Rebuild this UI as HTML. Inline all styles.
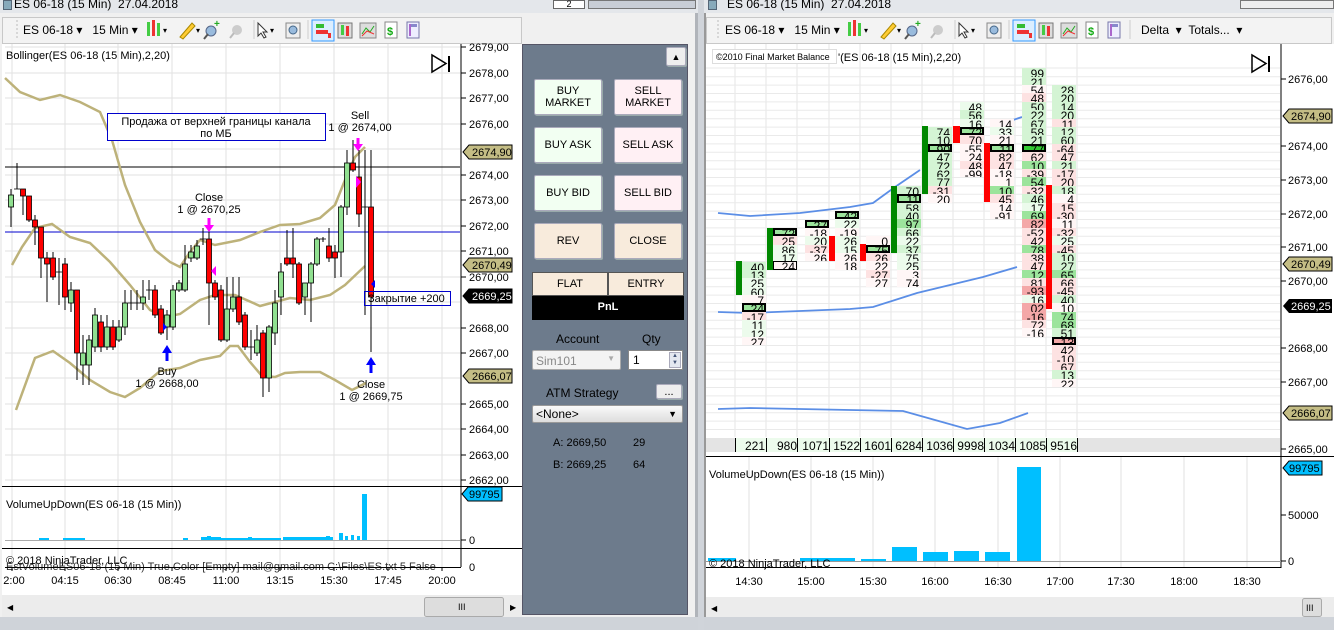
<!DOCTYPE html>
<html><head><meta charset="utf-8">
<style>
*{margin:0;padding:0;box-sizing:border-box}
body{width:1334px;height:630px;overflow:hidden;background:#d8dce2;font-family:"Liberation Sans",Arial,sans-serif;font-size:11px;color:#000;position:relative}
.a{position:absolute}
.tb{background:#f3f3f3;border:1px solid #c8c8c8}
.btn{position:absolute;border:1px solid #aab;border-radius:2px;text-align:center;font-size:11px;line-height:12px;display:flex;align-items:center;justify-content:center;box-shadow:1px 1px 0 #9aa}
.col{position:absolute;width:24px}
.col i{display:block;height:8.4px;font-style:normal;font-size:12px;line-height:12px;text-align:right;padding-right:2px;overflow:hidden}
.g{background:#d4f4d4}.G{background:#9ce49c}.p{background:#fde2e2}.R{background:#f4a8a8}.w{background:#fff6f6}.gw{background:#ecfbec}
.col i.b{outline:2px solid #000;outline-offset:-2px;background:#9ce49c}
.col i.bp{outline:2px solid #000;outline-offset:-2px;background:#f4a8a8}
</style></head><body>

<!-- title bars -->
<div class="a" style="left:0;top:0;width:698px;height:13px;background:#e4e7eb"></div>
<div class="a" style="left:14px;top:-3px;font-size:12px">ES 06-18 (15 Min)&nbsp; 27.04.2018</div>
<div class="a" style="left:3px;top:0;width:9px;height:10px;background:#8ab;border:1px solid #567"></div>
<div class="a" style="left:553px;top:0;width:32px;height:9px;background:#fff;border:1px solid #666;font-size:9px;text-align:center;line-height:6px">2</div>
<div class="a" style="left:588px;top:0;width:108px;height:9px;background:#c9ced6;border:1px solid #777"></div>
<div class="a" style="left:700px;top:0;width:634px;height:13px;background:#e4e7eb"></div>
<div class="a" style="left:727px;top:-3px;font-size:12px">ES 06-18 (15 Min)&nbsp; 27.04.2018</div>
<div class="a" style="left:708px;top:0;width:9px;height:10px;background:#8ab;border:1px solid #567"></div>
<div class="a" style="left:1240px;top:0;width:94px;height:9px;background:#eee;border:1px solid #777"></div>

<!-- window frames -->
<div class="a" style="left:0;top:13px;width:698px;height:617px;background:#f0f0f0;border-right:3px solid #b0b4ba"></div>
<div class="a" style="left:698px;top:0;width:6px;height:630px;background:#d0d4da"></div>
<div class="a" style="left:704px;top:13px;width:630px;height:617px;background:#f0f0f0;border-left:2px solid #999"></div>

<!-- toolbars -->
<div class="a tb" style="left:2px;top:17px;width:520px;height:27px"></div>
<div class="a tb" style="left:706px;top:17px;width:626px;height:27px"></div>
<div class="a" style="left:23px;top:23px;font-size:12px">ES 06-18 &#9662;&nbsp;&nbsp; 15 Min &#9662;</div>
<div class="a" style="left:725px;top:23px;font-size:12px">ES 06-18 &#9662;&nbsp;&nbsp; 15 Min &#9662;</div>
<div class="a" style="left:1141px;top:23px;font-size:12px">Delta &nbsp;&#9662;&nbsp;&nbsp;Totals... &nbsp;&#9662;</div>
<svg class="a" style="left:0;top:15px" width="1334" height="30">
 <g id="tbi">
 <line x1="17" y1="5" x2="17" y2="24" stroke="#bbb" stroke-dasharray="2 2"/>
 <rect x="147" y="7" width="3" height="14" fill="#4c4"/><rect x="152" y="5" width="3" height="16" fill="#e33"/><rect x="157" y="8" width="3" height="13" fill="#4c4"/><text x="163" y="18" font-size="8">&#9662;</text>
 <path d="M180 22 L192 8 L195 11 L183 24Z" fill="#fc3" stroke="#a80"/><text x="196" y="18" font-size="8">&#9662;</text>
 <circle cx="211" cy="16" r="5" fill="#9bd" stroke="#568"/><line x1="208" y1="19" x2="204" y2="24" stroke="#555" stroke-width="2"/><text x="214" y="12" font-size="10" fill="#2a2" font-weight="bold">+</text>
 <circle cx="237" cy="15" r="5" fill="#ccc"/><line x1="234" y1="18" x2="230" y2="23" stroke="#bbb" stroke-width="2"/>
 <line x1="254" y1="5" x2="254" y2="24" stroke="#ccc"/>
 <path d="M258 8 L258 21 L261 18 L264 23 L266 22 L263 17 L267 17Z" fill="#fff" stroke="#333"/><text x="270" y="18" font-size="8">&#9662;</text>
 <rect x="286" y="8" width="14" height="15" fill="#eee" stroke="#888"/><circle cx="293" cy="15" r="4" fill="#9bd" stroke="#468"/>
 <line x1="308" y1="5" x2="308" y2="24" stroke="#ccc"/>
 <rect x="312" y="5" width="22" height="21" fill="#dbeeff" stroke="#39f"/><rect x="316" y="9" width="8" height="4" fill="#3b3"/><rect x="316" y="15" width="12" height="4" fill="#e33"/><rect x="328" y="18" width="3" height="5" fill="#e33"/>
 <rect x="338" y="8" width="14" height="15" fill="#ddd" stroke="#777"/><rect x="341" y="10" width="3" height="10" fill="#4c4"/><rect x="346" y="11" width="3" height="10" fill="#e33"/>
 <rect x="360" y="8" width="16" height="15" fill="#ddd" stroke="#888"/><path d="M362 19 L366 13 L370 17 L374 11" stroke="#2a2" fill="none"/><path d="M362 21 L367 16 L374 19" stroke="#e33" fill="none"/>
 <rect x="385" y="7" width="12" height="16" fill="#fff" stroke="#888"/><text x="387" y="20" font-size="11" fill="#1a1" font-weight="bold">$</text>
 <rect x="407" y="7" width="12" height="16" fill="#eef" stroke="#77a"/><rect x="409" y="9" width="8" height="3" fill="#88c"/><rect x="409" y="9" width="2" height="12" fill="#a6c"/>
 </g>
 <use href="#tbi" x="701"/>
 <line x1="1130" y1="5" x2="1130" y2="24" stroke="#ccc"/>
</svg>

<!-- LEFT CHART -->
<svg class="a" style="left:0;top:0" width="700" height="630">
 <rect x="2" y="44" width="520" height="551" fill="#fff"/>
 <g stroke="#e2e2e2">
  <line x1="12" y1="44" x2="12" y2="567"/><line x1="65" y1="44" x2="65" y2="567"/><line x1="118" y1="44" x2="118" y2="567"/><line x1="172" y1="44" x2="172" y2="567"/><line x1="226" y1="44" x2="226" y2="567"/><line x1="280" y1="44" x2="280" y2="567"/><line x1="334" y1="44" x2="334" y2="567"/><line x1="388" y1="44" x2="388" y2="567"/><line x1="442" y1="44" x2="442" y2="567"/>
  <line x1="5" y1="47" x2="460" y2="47"/><line x1="5" y1="73" x2="460" y2="73"/><line x1="5" y1="98" x2="460" y2="98"/><line x1="5" y1="124" x2="460" y2="124"/><line x1="5" y1="149" x2="460" y2="149"/><line x1="5" y1="175" x2="460" y2="175"/><line x1="5" y1="200" x2="460" y2="200"/><line x1="5" y1="226" x2="460" y2="226"/><line x1="5" y1="251" x2="460" y2="251"/><line x1="5" y1="277" x2="460" y2="277"/><line x1="5" y1="302" x2="460" y2="302"/><line x1="5" y1="328" x2="460" y2="328"/><line x1="5" y1="353" x2="460" y2="353"/><line x1="5" y1="378" x2="460" y2="378"/><line x1="5" y1="404" x2="460" y2="404"/><line x1="5" y1="429" x2="460" y2="429"/><line x1="5" y1="455" x2="460" y2="455"/><line x1="5" y1="480" x2="460" y2="480"/>
 </g>
 <line x1="5" y1="167" x2="460" y2="167" stroke="#000"/>
 <line x1="5" y1="232" x2="460" y2="232" stroke="#00c"/>
 <g fill="none" stroke="#bdb27a" stroke-width="2.5">
  <polyline points="5,78 20,92 40,100 60,95 80,102 100,112 112,140 125,185 140,222 155,250 170,262 180,267 190,252 200,240 215,245 240,240 260,232 280,225 300,224 320,218 335,205 345,180 355,157 365,147"/>
  <polyline points="12,265 22,247 35,228 52,224 70,237 90,243 110,262 130,285 150,310 165,317 180,314 200,300 215,295 235,295 260,306 275,302 290,298 310,300 330,295 345,285 365,266"/>
  <polyline points="16,410 35,358 53,351 70,363 90,380 110,392 125,397 140,388 160,371 180,368 200,360 220,356 230,346 238,346 250,362 262,376 275,377 285,373 300,372 320,372 335,380 352,390 366,383"/>
 </g>
 <g stroke="#000" stroke-width="1">
  <line x1="11" y1="189" x2="11" y2="227"/><line x1="17" y1="163" x2="17" y2="189"/><line x1="23" y1="189" x2="23" y2="215"/><line x1="29" y1="196" x2="29" y2="222"/><line x1="35" y1="215" x2="35" y2="245"/><line x1="41" y1="227" x2="41" y2="278"/><line x1="47" y1="252" x2="47" y2="302"/><line x1="53" y1="252" x2="53" y2="280"/><line x1="59" y1="258" x2="59" y2="305"/><line x1="65" y1="258" x2="65" y2="310"/><line x1="71" y1="282" x2="71" y2="312"/><line x1="77" y1="290" x2="77" y2="380"/><line x1="83" y1="335" x2="83" y2="385"/><line x1="89" y1="335" x2="89" y2="385"/><line x1="95" y1="308" x2="95" y2="352"/><line x1="101" y1="315" x2="101" y2="352"/><line x1="107" y1="315" x2="107" y2="350"/><line x1="113" y1="320" x2="113" y2="350"/><line x1="119" y1="320" x2="119" y2="342"/><line x1="125" y1="290" x2="125" y2="335"/><line x1="131" y1="290" x2="131" y2="310"/><line x1="137" y1="290" x2="137" y2="310"/><line x1="143" y1="280" x2="143" y2="310"/><line x1="149" y1="280" x2="149" y2="300"/><line x1="155" y1="285" x2="155" y2="318"/><line x1="161" y1="305" x2="161" y2="335"/><line x1="167" y1="310" x2="167" y2="340"/><line x1="173" y1="285" x2="173" y2="330"/><line x1="179" y1="280" x2="179" y2="292"/><line x1="185" y1="245" x2="185" y2="292"/><line x1="191" y1="245" x2="191" y2="262"/><line x1="197" y1="240" x2="197" y2="260"/><line x1="203" y1="228" x2="203" y2="245"/><line x1="209" y1="230" x2="209" y2="325"/><line x1="215" y1="280" x2="215" y2="300"/><line x1="221" y1="285" x2="221" y2="342"/><line x1="227" y1="277" x2="227" y2="342"/><line x1="233" y1="277" x2="233" y2="312"/><line x1="239" y1="277" x2="239" y2="325"/><line x1="245" y1="312" x2="245" y2="350"/><line x1="251" y1="330" x2="251" y2="360"/><line x1="257" y1="325" x2="257" y2="356"/><line x1="263" y1="330" x2="263" y2="397"/><line x1="269" y1="325" x2="269" y2="392"/><line x1="275" y1="290" x2="275" y2="345"/><line x1="281" y1="263" x2="281" y2="315"/><line x1="287" y1="230" x2="287" y2="266"/><line x1="293" y1="228" x2="293" y2="278"/><line x1="299" y1="262" x2="299" y2="305"/><line x1="305" y1="283" x2="305" y2="315"/><line x1="311" y1="262" x2="311" y2="322"/><line x1="317" y1="237" x2="317" y2="266"/><line x1="323" y1="237" x2="323" y2="242"/><line x1="329" y1="228" x2="329" y2="262"/><line x1="335" y1="245" x2="335" y2="278"/><line x1="341" y1="205" x2="341" y2="277"/><line x1="347" y1="150" x2="347" y2="215"/><line x1="353" y1="140" x2="353" y2="172"/><line x1="359" y1="150" x2="359" y2="227"/><line x1="365" y1="150" x2="365" y2="315"/><line x1="371" y1="150" x2="371" y2="352"/>
 </g>
 <g stroke="#000" stroke-width="0.8">
  <g fill="#90e090">
   <rect x="8.5" y="195" width="5" height="12"/><rect x="68.5" y="290" width="5" height="13"/><rect x="80.5" y="353" width="5" height="12"/><rect x="86.5" y="340" width="5" height="25"/><rect x="92.5" y="315" width="5" height="32"/><rect x="104.5" y="327" width="5" height="20"/><rect x="116.5" y="327" width="5" height="13"/><rect x="122.5" y="303" width="5" height="24"/><rect x="140.5" y="297" width="5" height="6"/><rect x="164.5" y="315" width="5" height="12"/><rect x="170.5" y="290" width="5" height="37"/><rect x="176.5" y="283" width="5" height="7"/><rect x="182.5" y="264" width="5" height="26"/><rect x="188.5" y="252" width="5" height="6"/><rect x="194.5" y="246" width="5" height="12"/><rect x="224.5" y="309" width="5" height="31"/><rect x="230.5" y="297" width="5" height="12"/><rect x="254.5" y="340" width="5" height="13"/><rect x="266.5" y="327" width="5" height="51"/><rect x="272.5" y="303" width="5" height="30"/><rect x="278.5" y="272" width="5" height="25"/><rect x="302.5" y="283" width="5" height="14"/><rect x="308.5" y="264" width="5" height="19"/><rect x="314.5" y="239" width="5" height="25"/><rect x="338.5" y="207" width="5" height="45"/><rect x="344.5" y="163" width="5" height="44"/>
  </g>
  <g fill="#f00">
   <rect x="20.5" y="189" width="5" height="7"/><rect x="26.5" y="196" width="5" height="24"/><rect x="32.5" y="220" width="5" height="7"/><rect x="38.5" y="227" width="5" height="31"/><rect x="44.5" y="258" width="5" height="6"/><rect x="50.5" y="258" width="5" height="19"/><rect x="62.5" y="264" width="5" height="33"/><rect x="74.5" y="290" width="5" height="63"/><rect x="98.5" y="322" width="5" height="25"/><rect x="110.5" y="327" width="5" height="20"/><rect x="152.5" y="290" width="5" height="25"/><rect x="158.5" y="309" width="5" height="24"/><rect x="206.5" y="239" width="5" height="44"/><rect x="212.5" y="283" width="5" height="14"/><rect x="218.5" y="290" width="5" height="50"/><rect x="236.5" y="297" width="5" height="25"/><rect x="242.5" y="315" width="5" height="32"/><rect x="260.5" y="333" width="5" height="45"/><rect x="284.5" y="258" width="5" height="6"/><rect x="290.5" y="258" width="5" height="6"/><rect x="296.5" y="264" width="5" height="39"/><rect x="326.5" y="246" width="5" height="12"/><rect x="332.5" y="252" width="5" height="6"/><rect x="350.5" y="163" width="5" height="7"/><rect x="356.5" y="177" width="5" height="37"/><rect x="368.5" y="207" width="5" height="90"/>
  </g>
  <g><line x1="14" y1="189" x2="20" y2="189"/><line x1="56" y1="272" x2="62" y2="272"/><line x1="128" y1="303" x2="134" y2="303"/><line x1="134" y1="303" x2="140" y2="303"/><line x1="146" y1="290" x2="152" y2="290"/><line x1="200" y1="239" x2="206" y2="239"/><line x1="248" y1="347" x2="254" y2="347"/><line x1="320" y1="239" x2="326" y2="239"/><line x1="362" y1="207" x2="368" y2="207"/></g>
 </g>
 <g fill="#f0f">
  <rect x="356.5" y="138" width="3" height="7"/><path d="M353 144 L363 144 L358 151Z"/>
  <rect x="207.5" y="218" width="3" height="8"/><path d="M204 225 L214 225 L209 232Z"/>
  <path d="M356 176 L361 182 L356 188Z"/><path d="M216 266 L211 271 L216 276Z"/>
 </g>
 <g fill="#00f">
  <rect x="165.5" y="352" width="3" height="9"/><path d="M162 353 L172 353 L167 345Z"/>
  <rect x="369.5" y="364" width="3" height="9"/><path d="M366 365 L376 365 L371 357Z"/>
  <path d="M163 323 L167 327 L163 331Z"/><path d="M375 280 L371 284 L375 288Z"/>
 </g>
 <g font-size="11" text-anchor="middle">
  <text x="360" y="119">Sell</text><text x="360" y="131">1 @ 2674,00</text>
  <text x="209" y="201">Close</text><text x="209" y="213">1 @ 2670,25</text>
  <text x="167" y="375">Buy</text><text x="167" y="387">1 @ 2668,00</text>
  <text x="371" y="388">Close</text><text x="371" y="400">1 @ 2669,75</text>
 </g>
 <rect x="107.5" y="113.5" width="218" height="27" fill="#fff" stroke="#00c"/>
 <text x="216" y="125" font-size="11" text-anchor="middle">Продажа от верхней границы канала</text>
 <text x="216" y="137" font-size="11" text-anchor="middle">по МБ</text>
 <rect x="364.5" y="291.5" width="86" height="14" fill="none" stroke="#00c"/>
 <text x="368" y="302" font-size="11">Закрытие +200</text>
 <text x="6" y="59" font-size="11">Bollinger(ES 06-18 (15 Min),2,20)</text>
 <path d="M432 55 L432 72 L446 63.5Z" fill="none" stroke="#000" stroke-width="1.5"/><line x1="449" y1="56" x2="449" y2="72" stroke="#000" stroke-width="2"/>
 <line x1="461" y1="44" x2="461" y2="567" stroke="#000"/>
 <g font-size="11">
  <text x="469" y="51">2679,00</text><text x="469" y="77">2678,00</text><text x="469" y="102">2677,00</text><text x="469" y="128">2676,00</text><text x="469" y="179">2674,00</text><text x="469" y="204">2673,00</text><text x="469" y="230">2672,00</text><text x="469" y="255">2671,00</text><text x="469" y="281">2670,00</text><text x="469" y="332">2668,00</text><text x="469" y="357">2667,00</text><text x="469" y="408">2665,00</text><text x="469" y="433">2664,00</text><text x="469" y="459">2663,00</text><text x="469" y="484">2662,00</text>
 </g>
 <g stroke="#000"><line x1="461" y1="47" x2="466" y2="47"/><line x1="461" y1="73" x2="466" y2="73"/><line x1="461" y1="98" x2="466" y2="98"/><line x1="461" y1="124" x2="466" y2="124"/><line x1="461" y1="175" x2="466" y2="175"/><line x1="461" y1="200" x2="466" y2="200"/><line x1="461" y1="226" x2="466" y2="226"/><line x1="461" y1="251" x2="466" y2="251"/><line x1="461" y1="277" x2="466" y2="277"/><line x1="461" y1="328" x2="466" y2="328"/><line x1="461" y1="353" x2="466" y2="353"/><line x1="461" y1="404" x2="466" y2="404"/><line x1="461" y1="429" x2="466" y2="429"/><line x1="461" y1="455" x2="466" y2="455"/><line x1="461" y1="480" x2="466" y2="480"/></g>
 <path d="M463 152 L469 145 L512 145 L512 159 L469 159Z" fill="#c4bd85" stroke="#000"/><text x="472" y="156" font-size="11">2674,90</text>
 <path d="M463 265 L469 258 L512 258 L512 272 L469 272Z" fill="#c4bd85" stroke="#000"/><text x="472" y="269" font-size="11">2670,49</text>
 <path d="M463 296 L469 289 L512 289 L512 303 L469 303Z" fill="#000" stroke="#000"/><text x="472" y="300" font-size="11" fill="#fff">2669,25</text>
 <path d="M463 376 L469 369 L512 369 L512 383 L469 383Z" fill="#c4bd85" stroke="#000"/><text x="472" y="380" font-size="11">2666,07</text>
 <line x1="2" y1="486.5" x2="522" y2="486.5" stroke="#000"/>
 <line x1="2" y1="548.5" x2="522" y2="548.5" stroke="#000"/>
 <line x1="5" y1="540.5" x2="460" y2="540.5" stroke="#aaa"/>
 <text x="6" y="508" font-size="11">VolumeUpDown(ES 06-18 (15 Min))</text>
 <g fill="#00bfff">
  <rect x="39" y="538" width="10" height="2"/><rect x="63" y="538" width="22" height="2"/><rect x="183" y="538" width="5" height="2"/><rect x="201" y="537" width="20" height="3"/><rect x="207" y="536" width="4" height="4"/><rect x="221" y="538" width="60" height="2"/><rect x="248" y="537" width="4" height="3"/><rect x="283" y="537" width="50" height="3"/><rect x="326" y="536" width="4" height="4"/><rect x="339" y="533" width="4" height="7"/><rect x="345" y="536" width="3" height="4"/><rect x="351" y="535" width="3" height="5"/><rect x="357" y="536" width="3" height="4"/><rect x="362" y="494" width="5" height="46"/>
 </g>
 <path d="M462 494 L468 487 L502 487 L502 501 L468 501Z" fill="#00bfff" stroke="#000"/><text x="469" y="498" font-size="11">99795</text>
 <text x="469" y="544" font-size="11">0</text><line x1="461" y1="540" x2="466" y2="540" stroke="#000"/>
 <text x="469" y="571" font-size="11">0</text>
 <text x="6" y="564" font-size="11">© 2018 NinjaTrader, LLC</text>
 <text x="6" y="570" font-size="11" fill="#333">EstVolumeES06-18 (15 Min) True Color [Empty] mail@gmail.com C:\Files\ES.txt 5 False</text>
 <line x1="5" y1="567.5" x2="461" y2="567.5" stroke="#000"/>
 <g stroke="#000"><line x1="12" y1="567" x2="12" y2="571"/><line x1="65" y1="567" x2="65" y2="571"/><line x1="118" y1="567" x2="118" y2="571"/><line x1="172" y1="567" x2="172" y2="571"/><line x1="226" y1="567" x2="226" y2="571"/><line x1="280" y1="567" x2="280" y2="571"/><line x1="334" y1="567" x2="334" y2="571"/><line x1="388" y1="567" x2="388" y2="571"/><line x1="442" y1="567" x2="442" y2="571"/></g>
 <g font-size="11" text-anchor="middle"><text x="14" y="584">2:00</text><text x="65" y="584">04:15</text><text x="118" y="584">06:30</text><text x="172" y="584">08:45</text><text x="226" y="584">11:00</text><text x="280" y="584">13:15</text><text x="334" y="584">15:30</text><text x="388" y="584">17:45</text><text x="442" y="584">20:00</text></g>
 <rect x="2" y="595" width="520" height="22" fill="#ececec"/>
 <rect x="424.5" y="597.5" width="79" height="19" rx="2" fill="#ddd" stroke="#aaa"/>
 <text x="458" y="610" font-size="9">III</text>
 <text x="7" y="610" font-size="8">&#9664;</text><text x="510" y="610" font-size="8">&#9654;</text>
 <rect x="0" y="617" width="698" height="13" fill="#cfd3d9"/>
</svg>

<!-- CHART TRADER PANEL -->
<div class="a" style="left:522px;top:44px;width:166px;height:571px;background:#6d7b8c;border:1px solid #556"></div>
<div class="btn" style="left:666px;top:47px;width:20px;height:19px;background:#eee;font-size:9px">&#9650;</div>
<div class="btn" style="left:534px;top:79px;width:68px;height:36px;background:#f2fff2">BUY<br>MARKET</div>
<div class="btn" style="left:614px;top:79px;width:68px;height:36px;background:#fff0f4">SELL<br>MARKET</div>
<div class="btn" style="left:534px;top:127px;width:68px;height:36px;background:#f2fff2">BUY ASK</div>
<div class="btn" style="left:614px;top:127px;width:68px;height:36px;background:#fff0f4">SELL ASK</div>
<div class="btn" style="left:534px;top:175px;width:68px;height:36px;background:#f2fff2">BUY BID</div>
<div class="btn" style="left:614px;top:175px;width:68px;height:36px;background:#fff0f4">SELL BID</div>
<div class="btn" style="left:534px;top:223px;width:68px;height:36px;background:#f8ebdc">REV</div>
<div class="btn" style="left:614px;top:223px;width:68px;height:36px;background:#f8ebdc">CLOSE</div>
<div class="a" style="left:532px;top:272px;width:76px;height:24px;background:#f8ebdc;border:1px solid #555;text-align:center;line-height:22px">FLAT</div>
<div class="a" style="left:608px;top:272px;width:76px;height:24px;background:#f8ebdc;border:1px solid #555;text-align:center;line-height:22px">ENTRY</div>
<div class="a" style="left:532px;top:296px;width:152px;height:24px;background:#000;color:#fff;font-weight:bold;text-align:center;line-height:23px">PnL</div>
<div class="a" style="left:556px;top:332px;font-size:12px">Account</div>
<div class="a" style="left:642px;top:332px;font-size:12px">Qty</div>
<div class="a" style="left:532px;top:350px;width:89px;height:20px;background:#f3f3f3;border:1px solid #aaa;border-radius:2px;color:#888;font-size:12px;padding:3px 3px">Sim101<span style="position:absolute;right:5px;font-size:8px;color:#aaa">&#9660;</span></div>
<div class="a" style="left:628px;top:350px;width:55px;height:20px;background:#fff;border:1px solid #888;font-size:12px;padding:2px 4px">1<span style="position:absolute;right:1px;top:1px;width:12px;height:16px;background:#e4e8f0;border:1px solid #aab;font-size:6px;line-height:7px;text-align:center;color:#457">&#9650;<br>&#9660;</span></div>
<div class="a" style="left:546px;top:386px;font-size:12px">ATM Strategy</div>
<div class="btn" style="left:656px;top:384px;width:26px;height:15px;background:#eee;line-height:8px">...</div>
<div class="a" style="left:532px;top:405px;width:151px;height:18px;background:linear-gradient(#fafafa,#ddd);border:1px solid #999;border-radius:2px;font-size:12px;padding:1px 3px">&lt;None&gt;<span style="position:absolute;right:5px;top:3px;font-size:9px">&#9660;</span></div>
<div class="a" style="left:553px;top:437px;font-size:11px">A: 2669,50</div><div class="a" style="left:633px;top:437px;font-size:11px">29</div>
<div class="a" style="left:553px;top:459px;font-size:11px">B: 2669,25</div><div class="a" style="left:633px;top:459px;font-size:11px">64</div>

<!-- RIGHT CHART -->
<svg class="a" style="left:0;top:0" width="1334" height="630">
 <rect x="706" y="44" width="628" height="553" fill="#fff"/>
 <g stroke="#e4e4e4">
  <line x1="735" y1="44" x2="735" y2="437"/><line x1="766" y1="44" x2="766" y2="437"/><line x1="797" y1="44" x2="797" y2="437"/><line x1="829" y1="44" x2="829" y2="437"/><line x1="860" y1="44" x2="860" y2="437"/><line x1="891" y1="44" x2="891" y2="437"/><line x1="922" y1="44" x2="922" y2="437"/><line x1="953" y1="44" x2="953" y2="437"/><line x1="984" y1="44" x2="984" y2="437"/><line x1="1015" y1="44" x2="1015" y2="437"/><line x1="1046" y1="44" x2="1046" y2="437"/><line x1="1077" y1="44" x2="1077" y2="437"/>
 </g>
 <g stroke="#eaeaea">
  <line x1="706" y1="68" x2="1280" y2="68"/><line x1="706" y1="76.7" x2="1280" y2="76.7"/><line x1="706" y1="85.1" x2="1280" y2="85.1"/><line x1="706" y1="93.5" x2="1280" y2="93.5"/><line x1="706" y1="101.9" x2="1280" y2="101.9"/><line x1="706" y1="110.3" x2="1280" y2="110.3"/><line x1="706" y1="118.7" x2="1280" y2="118.7"/><line x1="706" y1="127.1" x2="1280" y2="127.1"/><line x1="706" y1="135.5" x2="1280" y2="135.5"/><line x1="706" y1="143.9" x2="1280" y2="143.9"/><line x1="706" y1="152.3" x2="1280" y2="152.3"/><line x1="706" y1="160.7" x2="1280" y2="160.7"/><line x1="706" y1="169.1" x2="1280" y2="169.1"/><line x1="706" y1="177.5" x2="1280" y2="177.5"/><line x1="706" y1="185.9" x2="1280" y2="185.9"/><line x1="706" y1="194.3" x2="1280" y2="194.3"/><line x1="706" y1="202.7" x2="1280" y2="202.7"/><line x1="706" y1="211.1" x2="1280" y2="211.1"/><line x1="706" y1="219.5" x2="1280" y2="219.5"/><line x1="706" y1="227.9" x2="1280" y2="227.9"/><line x1="706" y1="236.3" x2="1280" y2="236.3"/><line x1="706" y1="244.7" x2="1280" y2="244.7"/><line x1="706" y1="253.1" x2="1280" y2="253.1"/><line x1="706" y1="261.5" x2="1280" y2="261.5"/><line x1="706" y1="269.9" x2="1280" y2="269.9"/><line x1="706" y1="278.3" x2="1280" y2="278.3"/><line x1="706" y1="286.7" x2="1280" y2="286.7"/><line x1="706" y1="295.1" x2="1280" y2="295.1"/><line x1="706" y1="303.5" x2="1280" y2="303.5"/><line x1="706" y1="311.9" x2="1280" y2="311.9"/><line x1="706" y1="320.3" x2="1280" y2="320.3"/><line x1="706" y1="328.7" x2="1280" y2="328.7"/><line x1="706" y1="337.1" x2="1280" y2="337.1"/><line x1="706" y1="345.5" x2="1280" y2="345.5"/><line x1="706" y1="353.9" x2="1280" y2="353.9"/><line x1="706" y1="362.3" x2="1280" y2="362.3"/><line x1="706" y1="370.7" x2="1280" y2="370.7"/><line x1="706" y1="379.1" x2="1280" y2="379.1"/><line x1="706" y1="387.5" x2="1280" y2="387.5"/><line x1="706" y1="395.9" x2="1280" y2="395.9"/><line x1="706" y1="404.3" x2="1280" y2="404.3"/><line x1="706" y1="412.7" x2="1280" y2="412.7"/><line x1="706" y1="421.1" x2="1280" y2="421.1"/><line x1="706" y1="429.5" x2="1280" y2="429.5"/>
 </g>
 <g fill="none" stroke="#5b8ee6" stroke-width="1.8">
  <polyline points="718,213 750,216 800,213 850,207 873,203 895,187 920,170"/>
  <polyline points="1013,120 1022,117"/>
  <polyline points="718,312 750,313 800,311 850,309 873,307 895,300 917,293 950,285 983,277 1017,267"/>
  <polyline points="718,409 750,408 800,409 850,410 903,411 935,420 967,429 1000,423 1028,413"/>
 </g>
 <g>
  <rect x="736" y="261" width="6" height="34" fill="#080"/>
  <rect x="767" y="228" width="6" height="42" fill="#080"/>
  <rect x="829" y="236" width="6" height="25" fill="#f00"/>
  <rect x="860" y="244" width="6" height="17" fill="#f00"/>
  <rect x="891" y="186" width="6" height="67" fill="#080"/>
  <rect x="922" y="126" width="6" height="68" fill="#080"/>
  <rect x="953" y="126" width="7" height="17" fill="#f00"/>
  <rect x="984" y="143" width="6" height="59" fill="#f00"/>
  <rect x="1046" y="185" width="6" height="124" fill="#f00"/>
 </g>
 <rect x="712.5" y="49.5" width="124" height="14" fill="#fff" stroke="#ddd"/>
 <text x="716" y="60" font-size="9">©2010 Final Market Balance</text>
 <text x="838" y="61" font-size="11">'(ES 06-18 (15 Min),2,20)</text>
 <path d="M1252 55 L1252 72 L1266 63.5Z" fill="none" stroke="#000" stroke-width="1.5"/><line x1="1269" y1="56" x2="1269" y2="72" stroke="#000" stroke-width="2"/>
 <rect x="706" y="438" width="574" height="14" fill="#e4e4e4"/>
 <rect x="736" y="438" width="341" height="14" fill="#ecfbec"/>
 <g stroke="#000"><line x1="735.5" y1="438" x2="735.5" y2="452"/><line x1="766.5" y1="438" x2="766.5" y2="452"/><line x1="797.5" y1="438" x2="797.5" y2="452"/><line x1="829.5" y1="438" x2="829.5" y2="452"/><line x1="860.5" y1="438" x2="860.5" y2="452"/><line x1="891.5" y1="438" x2="891.5" y2="452"/><line x1="922.5" y1="438" x2="922.5" y2="452"/><line x1="953.5" y1="438" x2="953.5" y2="452"/><line x1="984.5" y1="438" x2="984.5" y2="452"/><line x1="1015.5" y1="438" x2="1015.5" y2="452"/><line x1="1046.5" y1="438" x2="1046.5" y2="452"/><line x1="1077.5" y1="438" x2="1077.5" y2="452"/></g>
 <g font-size="12" text-anchor="end"><text x="765" y="450">221</text><text x="797" y="450">980</text><text x="829" y="450">1071</text><text x="860" y="450">1522</text><text x="891" y="450">1601</text><text x="922" y="450">6284</text><text x="953" y="450">1036</text><text x="984" y="450">9998</text><text x="1015" y="450">1034</text><text x="1046" y="450">1085</text><text x="1077" y="450">9516</text></g>
 <line x1="1281" y1="44" x2="1281" y2="568" stroke="#000"/>
 <g font-size="11"><text x="1288" y="83">2676,00</text><text x="1288" y="150">2674,00</text><text x="1288" y="184">2673,00</text><text x="1288" y="218">2672,00</text><text x="1288" y="251">2671,00</text><text x="1288" y="285">2670,00</text><text x="1288" y="352">2668,00</text><text x="1288" y="386">2667,00</text><text x="1288" y="453">2665,00</text></g>
 <g stroke="#000"><line x1="1281" y1="79" x2="1286" y2="79"/><line x1="1281" y1="146" x2="1286" y2="146"/><line x1="1281" y1="180" x2="1286" y2="180"/><line x1="1281" y1="214" x2="1286" y2="214"/><line x1="1281" y1="247" x2="1286" y2="247"/><line x1="1281" y1="281" x2="1286" y2="281"/><line x1="1281" y1="348" x2="1286" y2="348"/><line x1="1281" y1="382" x2="1286" y2="382"/><line x1="1281" y1="449" x2="1286" y2="449"/></g>
 <path d="M1283 116 L1289 109 L1332 109 L1332 123 L1289 123Z" fill="#c4bd85" stroke="#000"/><text x="1291" y="120" font-size="11">2674,90</text>
 <path d="M1283 264 L1289 257 L1332 257 L1332 271 L1289 271Z" fill="#c4bd85" stroke="#000"/><text x="1291" y="268" font-size="11">2670,49</text>
 <path d="M1283 306 L1289 299 L1332 299 L1332 313 L1289 313Z" fill="#000"/><text x="1291" y="310" font-size="11" fill="#fff">2669,25</text>
 <path d="M1283 413 L1289 406 L1332 406 L1332 420 L1289 420Z" fill="#c4bd85" stroke="#000"/><text x="1291" y="417" font-size="11">2666,07</text>
 <line x1="706" y1="456.5" x2="1334" y2="456.5" stroke="#000"/>
 <g stroke="#e2e2e2"><line x1="749" y1="457" x2="749" y2="567"/><line x1="811" y1="457" x2="811" y2="567"/><line x1="873" y1="457" x2="873" y2="567"/><line x1="935" y1="457" x2="935" y2="567"/><line x1="998" y1="457" x2="998" y2="567"/><line x1="1060" y1="457" x2="1060" y2="567"/><line x1="1121" y1="457" x2="1121" y2="567"/><line x1="1184" y1="457" x2="1184" y2="567"/><line x1="1247" y1="457" x2="1247" y2="567"/></g>
 <line x1="706" y1="561.5" x2="1281" y2="561.5" stroke="#999"/>
 <line x1="706" y1="567.5" x2="1281" y2="567.5" stroke="#000"/>
 <text x="709" y="478" font-size="11">VolumeUpDown(ES 06-18 (15 Min))</text>
 <g fill="#00bfff"><rect x="708" y="558" width="28" height="3"/><rect x="800" y="558" width="55" height="3"/><rect x="861" y="559" width="25" height="2"/><rect x="892" y="547" width="25" height="14"/><rect x="923" y="552" width="25" height="9"/><rect x="954" y="551" width="25" height="10"/><rect x="985" y="552" width="25" height="9"/><rect x="1017" y="467" width="24" height="94"/></g>
 <text x="709" y="567" font-size="11">© 2018 NinjaTrader, LLC</text>
 <path d="M1283 468 L1289 461 L1322 461 L1322 475 L1289 475Z" fill="#00bfff" stroke="#000"/><text x="1289" y="472" font-size="11">99795</text>
 <text x="1288" y="519" font-size="11">50000</text><line x1="1281" y1="515" x2="1286" y2="515" stroke="#000"/>
 <text x="1288" y="565" font-size="11">0</text><line x1="1281" y1="561" x2="1286" y2="561" stroke="#000"/>
 <g font-size="11" text-anchor="middle"><text x="749" y="585">14:30</text><text x="811" y="585">15:00</text><text x="873" y="585">15:30</text><text x="935" y="585">16:00</text><text x="998" y="585">16:30</text><text x="1060" y="585">17:00</text><text x="1121" y="585">17:30</text><text x="1184" y="585">18:00</text><text x="1247" y="585">18:30</text></g>
 <rect x="706" y="597" width="628" height="20" fill="#ececec"/>
 <rect x="1302.5" y="598.5" width="19" height="18" rx="2" fill="#ddd" stroke="#aaa"/><text x="1306" y="611" font-size="9">III</text>
 <text x="711" y="611" font-size="8">&#9664;</text>
 <rect x="704" y="617" width="630" height="13" fill="#cfd3d9"/>
</svg>

<div class="col" style="left:742px;top:261.5px"><i class="g">40</i><i class="g">13</i><i class="gw">25</i><i class="gw">60</i><i class="w">7</i><i class="b">24</i><i class="p">-17</i><i class="gw">11</i><i class="gw">12</i><i class="w">27</i></div>
<div class="col" style="left:773px;top:227.9px"><i class="b">72</i><i class="p">25</i><i class="gw">86</i><i class="gw">17</i><i class="w" style="outline:1px solid #000;outline-offset:-1px">24</i></div>
<div class="col" style="left:805px;top:219.5px"><i class="b">27</i><i class="w">-18</i><i class="gw">20</i><i class="p">-37</i><i class="w">26</i></div>
<div class="col" style="left:835px;top:211.1px"><i class="b">42</i><i class="gw">22</i><i class="w">-19</i><i class="gw">26</i><i class="gw">15</i><i class="w">26</i><i class="w">18</i></div>
<div class="col" style="left:866px;top:236.3px"><i class="w">0</i><i class="b">75</i><i class="p">26</i><i class="w">22</i><i class="p">-27</i><i class="w">27</i></div>
<div class="col" style="left:897px;top:185.9px"><i class="g">70</i><i class="b">11</i><i class="g">58</i><i class="g">40</i><i class="G">97</i><i class="g">66</i><i class="gw">22</i><i class="g">37</i><i class="gw">75</i><i class="gw">25</i><i class="w">3</i><i class="w">74</i></div>
<div class="col" style="left:928px;top:127.1px"><i class="g">74</i><i class="g">10</i><i class="b">90</i><i class="g">47</i><i class="g">72</i><i class="g">62</i><i class="g">77</i><i class="p">-31</i><i class="w">20</i></div>
<div class="col" style="left:960px;top:101.9px"><i class="gw">48</i><i class="g">56</i><i class="gw">16</i><i class="b">72</i><i class="p">70</i><i class="w">-55</i><i class="w">24</i><i class="p">48</i><i class="w">-99</i></div>
<div class="col" style="left:990px;top:118.7px"><i class="w">14</i><i class="gw">33</i><i class="w">21</i><i class="b">11</i><i class="p">82</i><i class="p">47</i><i class="w">-18</i><i class="w">1</i><i class="G">10</i><i class="p">45</i><i class="w">14</i><i class="w">-91</i></div>
<div class="col" style="left:1022px;top:68.3px"><i class="g">99</i><i class="g">21</i><i class="w">54</i><i class="p">48</i><i class="g">50</i><i class="g">22</i><i class="g">67</i><i class="g">58</i><i class="g">21</i><i class="b" style="background:#3c3">77</i><i class="p">62</i><i class="G">10</i><i class="p">-39</i><i class="G">54</i><i class="p">-32</i><i class="g">46</i><i class="gw">17</i><i class="G">69</i><i class="R">82</i><i class="p">-52</i><i class="p">42</i><i class="G">78</i><i class="p">38</i><i class="p">47</i><i class="G">12</i><i class="p">81</i><i class="R">-93</i><i class="gw">16</i><i class="R">02</i><i class="R">-16</i><i class="p">72</i><i class="w">-16</i></div>
<div class="col" style="left:1052px;top:85.1px"><i class="g">28</i><i class="g">20</i><i class="g">14</i><i class="g">20</i><i class="p">11</i><i class="g">12</i><i class="g">60</i><i class="p">-64</i><i class="p">47</i><i class="g">21</i><i class="p">-17</i><i class="p">20</i><i class="g">18</i><i class="w">4</i><i class="p">15</i><i class="p">-30</i><i class="w">11</i><i class="p">-32</i><i class="gw">25</i><i class="p">-45</i><i class="g">10</i><i class="g">27</i><i class="G">65</i><i class="p">66</i><i class="p">-45</i><i class="g">40</i><i class="w">10</i><i class="G">74</i><i class="G">68</i><i class="g">51</i><i class="bp">-13</i><i class="p">42</i><i class="p">-10</i><i class="p">67</i><i class="g">13</i><i class="w">22</i></div>
</body></html>
